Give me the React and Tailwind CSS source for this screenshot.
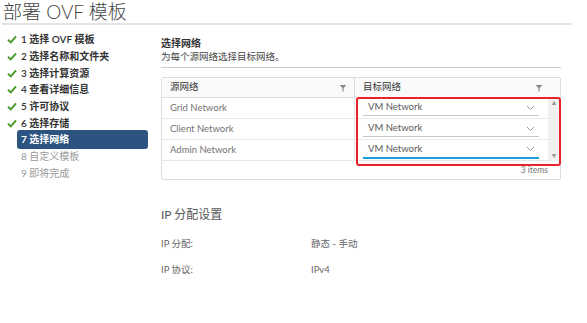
import React from "react";

const font = { fontFamily: '"Lato", "Noto Sans CJK SC", sans-serif' };

const Check = () => (
  <svg width="10" height="9" viewBox="0 0 10 9" className="absolute left-[7px] top-[4px]">
    <path d="M1 4.8 L3.8 7.4 L9 1.4" fill="none" stroke="#4a9a2a" strokeWidth="2" />
  </svg>
);

const Chevron = () => (
  <svg width="9" height="6" viewBox="0 0 9 6">
    <path d="M1 1 L4.5 4.5 L8 1" fill="none" stroke="#9a9a9a" strokeWidth="1" />
  </svg>
);

const Filter = () => (
  <svg width="8" height="8" viewBox="0 0 8 8">
    <path d="M0.5 1 H7.5 L4.6 4 V7.5 H3.4 V4 Z" fill="#8a8a8a" />
  </svg>
);

const steps = [
  { n: "1 选择 OVF 模板", done: true },
  { n: "2 选择名称和文件夹", done: true },
  { n: "3 选择计算资源", done: true },
  { n: "4 查看详细信息", done: true },
  { n: "5 许可协议", done: true },
  { n: "6 选择存储", done: true },
  { n: "7 选择网络", active: true },
  { n: "8 自定义模板" },
  { n: "9 即将完成" },
];

const rows = ["Grid Network", "Client Network", "Admin Network"];

export default function App() {
  return (
    <div className="w-[587px] h-[323px] bg-white overflow-hidden text-[#565656]" style={font}>
      <div className="pl-[3px] pt-[1px] h-[23px] text-[19px] leading-[22px] text-[#444] font-light">部署 OVF 模板</div>
      <div className="ml-[2px] w-[570px] h-[2px] bg-[#e4e4e4]"></div>

      <div className="flex">
        {/* sidebar */}
        <div className="w-[161px] pt-[6px] flex flex-col">
          {steps.map((s) =>
            s.active ? (
              <div key={s.n} className="h-[16.75px] flex items-center">
                <div className="ml-[17px] w-[131px] h-[19px] rounded-[3px] bg-[#2d5380] text-white font-bold text-[10px] leading-[19px] pl-[4px]">
                  {s.n}
                </div>
              </div>
            ) : (
              <div key={s.n} className="relative h-[16.75px] pl-[21px] text-[10px] leading-[16.75px] font-semibold text-[#333]">
                {s.done && <Check />}
                <span className={s.done ? "" : "text-[#9a9a9a] font-normal"}>{s.n}</span>
              </div>
            )
          )}
        </div>

        {/* main */}
        <div className="w-[400px]">
          <div className="pt-[12px] text-[10px] leading-[13px] font-semibold text-[#333]">选择网络</div>
          <div className="text-[9.5px] leading-[13px] text-[#444]">为每个源网络选择目标网络。</div>
          <div className="mt-[4px] h-[1px] bg-[#cccccc]"></div>

          <div className="relative mt-[9px] border border-[#dddddd] rounded-[2px] text-[9.5px]">
            <div className="flex h-[20px] bg-[#fafafa] border-b border-[#dddddd] text-[#333]">
              <div className="w-[193px] flex items-center justify-between pl-[8px] pr-[7px] border-r border-[#dddddd]">
                <span>源网络</span>
                <Filter />
              </div>
              <div className="flex-1 flex items-center justify-between pl-[8px] pr-[17px]">
                <span>目标网络</span>
                <Filter />
              </div>
            </div>
            <div className="flex">
              <div className="flex-1">
                {rows.map((r, i) => (
                  <div key={r} className="flex h-[21px] border-b border-[#e8e8e8]">
                    <div className="w-[193px] flex items-center pl-[8px] text-[#737373] border-r border-[#e8e8e8]">{r}</div>
                    <div className="flex-1 flex items-center pl-[8px] pr-[9px]">
                      <div className={"w-full h-[16px] flex items-center justify-between pl-[5px] pr-[4px] border-b " + (i === 2 ? "border-[#1a9fd9] border-b-2 h-[17px]" : "border-[#c6c6c6]")}>
                        <span className="text-[#5a5a5a]">VM Network</span>
                        <Chevron />
                      </div>
                    </div>
                  </div>
                ))}
              </div>
              <div className="w-[12px] bg-[#f1f1f1] flex flex-col justify-between items-center py-[3px] text-[#999] text-[5px] leading-[5px]">
                <span>▲</span>
                <span>▼</span>
              </div>
            </div>
            <div className="h-[18px] flex items-center justify-end pr-[12px] text-[8.5px] text-[#777]">3 items</div>

            <div className="absolute left-[194px] top-[19px] w-[205px] h-[69px] border-2 border-[#e8232a] rounded-[3px]"></div>
          </div>

          <div className="mt-[27px] text-[12px] leading-[16px] text-[#555]">IP 分配设置</div>
          <div className="mt-[14px] flex text-[9.5px] leading-[13px] text-[#666]">
            <div className="w-[150px]">IP 分配:</div>
            <div>静态 - 手动</div>
          </div>
          <div className="mt-[13px] flex text-[9.5px] leading-[13px] text-[#666]">
            <div className="w-[150px]">IP 协议:</div>
            <div>IPv4</div>
          </div>
        </div>
      </div>
    </div>
  );
}
